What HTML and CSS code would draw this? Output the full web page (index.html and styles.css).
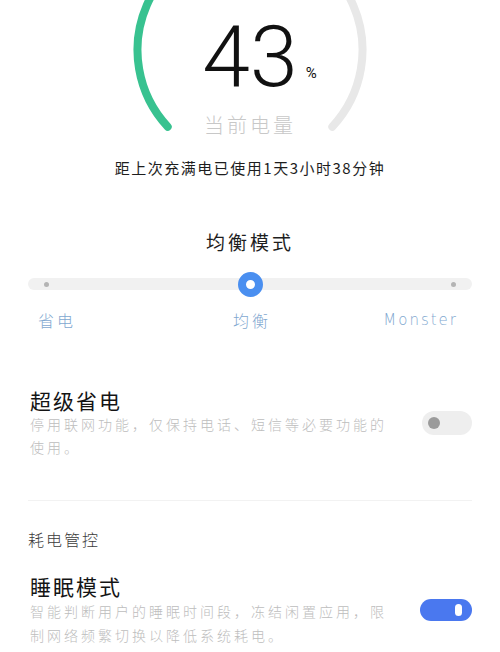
FILE: index.html
```html
<!DOCTYPE html>
<html lang="zh-CN">
<head>
    <meta charset="UTF-8">
    <meta name="viewport" content="width=device-width, initial-scale=1.0">
    <title>电池</title>
    <link rel="stylesheet" href="styles.css">
</head>
<body>
    <div class="gauge">
        <svg class="gauge-ring" width="500" height="140" viewBox="0 0 500 140">
            <path class="ring-rest" d="M 250 -62.5 A 112.5 112.5 0 0 1 332.3 126.7" />
            <path class="ring-level" d="M 167.7 126.7 A 112.5 112.5 0 0 1 250 -62.5" />
        </svg>
        <div class="value">43<span class="unit">%</span></div>
        <div class="value-label">当前电量</div>
    </div>

    <p class="since">距上次充满电已使用1天3小时38分钟</p>

    <h2 class="mode-title">均衡模式</h2>
    <div class="slider">
        <span class="stop"></span>
        <span class="knob"></span>
        <span class="stop"></span>
    </div>
    <div class="slider-labels">
        <span class="left">省电</span>
        <span class="mid">均衡</span>
        <span class="right">Monster</span>
    </div>

    <div class="setting first">
        <div class="setting-text">
            <div class="setting-title">超级省电</div>
            <div class="setting-desc">停用联网功能，仅保持电话、短信等必要功能的使用。</div>
        </div>
        <span class="switch"></span>
    </div>

    <div class="divider"></div>

    <div class="section-title">耗电管控</div>

    <div class="setting">
        <div class="setting-text">
            <div class="setting-title">睡眠模式</div>
            <div class="setting-desc wide">智能判断用户的睡眠时间段，冻结闲置应用，限制网络频繁切换以降低系统耗电。</div>
        </div>
        <span class="switch on"></span>
    </div>
</body>
</html>
```

FILE: styles.css
```css
body {
    margin: 0;
    padding: 0;
    background-color: #ffffff;
    font-family: "Noto Sans CJK SC", "Noto Sans", sans-serif;
    color: #1c1c1c;
    width: 500px;
    height: 652px;
    overflow: hidden;
}

/* battery ring */
.gauge {
    position: relative;
    height: 140px;
    display: flex;
    flex-direction: column;
    align-items: center;
}
.gauge-ring {
    position: absolute;
    top: 0;
    left: 0;
}
.gauge-ring path {
    fill: none;
    stroke-width: 8;
    stroke-linecap: round;
}
.ring-level {
    stroke: #38c290;
}
.ring-rest {
    stroke: #e8e8e8;
}
.value {
    position: relative;
    margin-top: 14px;
    font-family: "Roboto", "Liberation Sans", sans-serif;
    font-weight: 300;
    font-size: 86px;
    line-height: 86px;
    color: #111;
}
.unit {
    display: inline-block;
    width: 18px;
    margin-right: -18px;
    padding-left: 8px;
    box-sizing: border-box;
    font-size: 15px;
    line-height: 15px;
    font-weight: 400;
    vertical-align: 8px;
}
.value-label {
    position: relative;
    margin-top: 11px;
    font-size: 20px;
    line-height: 28px;
    font-weight: 300;
    letter-spacing: 3px;
    color: #c8c8c8;
}

.since {
    margin: 17px 0 0;
    text-align: center;
    font-size: 15px;
    line-height: 22px;
    letter-spacing: 1.5px;
    color: #1e1e1e;
}

/* mode slider */
.mode-title {
    margin: 49px 0 0;
    text-align: center;
    font-size: 19px;
    line-height: 28px;
    font-weight: 400;
    letter-spacing: 3px;
    color: #1e1e1e;
}
.slider {
    margin: 22px 28px 0;
    height: 12px;
    display: flex;
    align-items: center;
    justify-content: space-between;
    padding: 0 16px;
    background-color: #f1f1f1;
    border-radius: 6px;
}
.stop {
    width: 5px;
    height: 5px;
    border-radius: 50%;
    background-color: #b4b4b4;
}
.knob {
    flex-shrink: 0;
    width: 9px;
    height: 9px;
    border-radius: 50%;
    border: 8px solid #4a8ff0;
    background-color: #fff;
}
.slider-labels {
    margin: 18px 42px 0 38px;
    display: grid;
    grid-template-columns: 1fr auto 1fr;
    font-size: 16px;
    line-height: 24px;
    font-weight: 300;
    letter-spacing: 3px;
    color: #7fa8d0;
}
.slider-labels .mid {
    text-align: center;
    padding-left: 8px;
}
.slider-labels .right {
    text-align: right;
    font-family: "DejaVu Sans", sans-serif;
    font-weight: 300;
    font-size: 15px;
    letter-spacing: 2px;
}

/* setting rows */
.setting {
    margin: 22px 28px 0 30px;
    display: flex;
    align-items: center;
    justify-content: space-between;
}
.setting.first {
    margin-top: 55px;
}
.setting-text {
    width: 362px;
}
.setting-title {
    font-size: 21px;
    line-height: 26px;
    font-weight: 400;
    letter-spacing: 2px;
    color: #141414;
}
.setting-desc {
    font-size: 14px;
    line-height: 23px;
    font-weight: 300;
    letter-spacing: 3px;
    color: #bdbdbd;
}
.setting-desc.wide {
    line-height: 24px;
}
.switch {
    position: relative;
    width: 50px;
    height: 24px;
    border-radius: 12px;
    background-color: #eeeeee;
    display: flex;
    align-items: center;
    padding: 0 6px;
    box-sizing: border-box;
}
.switch::after {
    content: "";
    width: 12px;
    height: 12px;
    border-radius: 50%;
    background-color: #9b9b9b;
}
.switch.on {
    width: 52px;
    height: 22px;
    background-color: #4a78ef;
    justify-content: flex-end;
    padding: 0 10px;
}
.switch.on::after {
    width: 7px;
    height: 12px;
    border-radius: 4px;
    background-color: #fff;
}

.divider {
    margin: 41px 28px 0;
    height: 1px;
    background-color: #f2f2f2;
}
.section-title {
    margin: 26px 0 0 28px;
    font-size: 16px;
    line-height: 24px;
    font-weight: 300;
    letter-spacing: 2px;
    color: #3c3c3c;
}
```
